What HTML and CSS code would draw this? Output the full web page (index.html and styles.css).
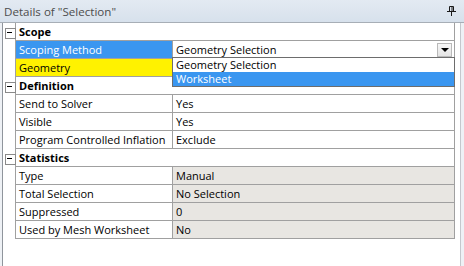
FILE: index.html
```html
<!DOCTYPE html>
<html>
<head>
  <title>Details of "Selection"</title>
  <link rel="stylesheet" href="styles.css">
</head>
<body>
  <div class="pane">
    <div class="titlebar">
      <span class="title">Details of "Selection"</span>
      <svg class="pin" width="9" height="10" viewBox="0 0 9 10">
        <path d="M2.5 0.5h4v5h-4z" fill="none" stroke="#1a1a1a"/>
        <path d="M5 1v4.5" stroke="#1a1a1a"/>
        <path d="M0 5.5h9" stroke="#1a1a1a"/>
        <path d="M4.5 6v4" stroke="#1a1a1a"/>
      </svg>
    </div>

    <div class="body">
      <div class="grid">
        <!-- Scope -->
        <div class="row group">
          <span class="toggle"></span>
          <div class="cell head">Scope</div>
        </div>
        <div class="row">
          <span class="gap"></span>
          <div class="cell name selected">Scoping Method</div>
          <div class="cell value combo">
            Geometry Selection
            <span class="drop-btn"></span>
            <ul class="drop-list">
              <li>Geometry Selection</li>
              <li class="active">Worksheet</li>
            </ul>
          </div>
        </div>
        <div class="row">
          <span class="gap"></span>
          <div class="cell name required">Geometry</div>
          <div class="cell value"></div>
        </div>

        <!-- Definition -->
        <div class="row group">
          <span class="toggle"></span>
          <div class="cell head">Definition</div>
        </div>
        <div class="row">
          <span class="gap"></span>
          <div class="cell name">Send to Solver</div>
          <div class="cell value">Yes</div>
        </div>
        <div class="row">
          <span class="gap"></span>
          <div class="cell name">Visible</div>
          <div class="cell value">Yes</div>
        </div>
        <div class="row">
          <span class="gap"></span>
          <div class="cell name">Program Controlled Inflation</div>
          <div class="cell value">Exclude</div>
        </div>

        <!-- Statistics -->
        <div class="row group">
          <span class="toggle"></span>
          <div class="cell head">Statistics</div>
        </div>
        <div class="row">
          <span class="gap"></span>
          <div class="cell name">Type</div>
          <div class="cell value readonly">Manual</div>
        </div>
        <div class="row">
          <span class="gap"></span>
          <div class="cell name">Total Selection</div>
          <div class="cell value readonly">No Selection</div>
        </div>
        <div class="row">
          <span class="gap"></span>
          <div class="cell name">Suppressed</div>
          <div class="cell value readonly">0</div>
        </div>
        <div class="row">
          <span class="gap"></span>
          <div class="cell name">Used by Mesh Worksheet</div>
          <div class="cell value readonly">No</div>
        </div>
      </div>
    </div>
  </div>
</body>
</html>
```

FILE: styles.css
```css
* {
  box-sizing: border-box;
}
body {
  margin: 0;
  background-color: #eef1f5;
  font-family: "Open Sans", "Noto Sans", sans-serif;
  font-size: 11px;
  color: #000;
}
.pane {
  width: 464px;
  height: 266px;
  display: flex;
  flex-direction: column;
}
.titlebar {
  height: 23px;
  display: flex;
  align-items: center;
  justify-content: space-between;
  padding: 0 8px 0 4px;
  background: linear-gradient(#e3eaf2, #d7e1ec);
  border-bottom: 1px solid #a7aeb6;
}
.title {
  color: #4d4d4d;
  font-size: 11.6px;
}
.pin {
  display: block;
}
.body {
  flex: 1;
  margin-left: 2px;
  margin-right: 3px;
  background-color: #fff;
  border-left: 1px solid #8f959c;
  border-right: 1px solid #c4c8cd;
}
.grid {
  width: 452px;
}
.row {
  display: flex;
  height: 18px;
}
.toggle,
.gap {
  width: 12px;
  flex: none;
  position: relative;
}
.toggle::before {
  content: "";
  position: absolute;
  left: 2px;
  top: 5px;
  width: 9px;
  height: 9px;
  border: 1px solid #8a8a8a;
  background-color: #fff;
}
.toggle::after {
  content: "";
  position: absolute;
  left: 4px;
  top: 9px;
  width: 5px;
  height: 1px;
  background-color: #000;
}
.cell {
  height: 18px;
  line-height: 18px;
  padding-left: 3px;
  border-left: 1px solid #a0a0a0;
  border-bottom: 1px solid #a0a0a0;
  white-space: nowrap;
}
.head {
  flex: 1;
  font-weight: bold;
  border-right: 1px solid #a0a0a0;
}
.name {
  width: 157px;
  flex: none;
}
.value {
  flex: 1;
  border-right: 1px solid #a0a0a0;
}
.selected {
  background-color: #3a96f0;
  color: #fff;
}
.required {
  background-color: #fff200;
}
.readonly {
  background-color: #e8e6e2;
}
.combo {
  position: relative;
}
.drop-btn {
  position: absolute;
  right: 2px;
  top: 2px;
  width: 15px;
  height: 14px;
  border: 1px solid #b9b9b9;
  background: linear-gradient(#f7f7f7, #e4e4e4);
}
.drop-btn::after {
  content: "";
  position: absolute;
  left: 3px;
  top: 4px;
  border-left: 4px solid transparent;
  border-right: 4px solid transparent;
  border-top: 4px solid #000;
}
.drop-list {
  position: absolute;
  left: -1px;
  right: -1px;
  top: 16px;
  margin: 0;
  padding: 0;
  list-style: none;
  background-color: #fff;
  border: 1px solid #6d6d6d;
  z-index: 2;
}
.drop-list li {
  height: 14px;
  line-height: 14px;
  padding-left: 3px;
}
.drop-list .active {
  background-color: #3a96f0;
  color: #fff;
}
```
